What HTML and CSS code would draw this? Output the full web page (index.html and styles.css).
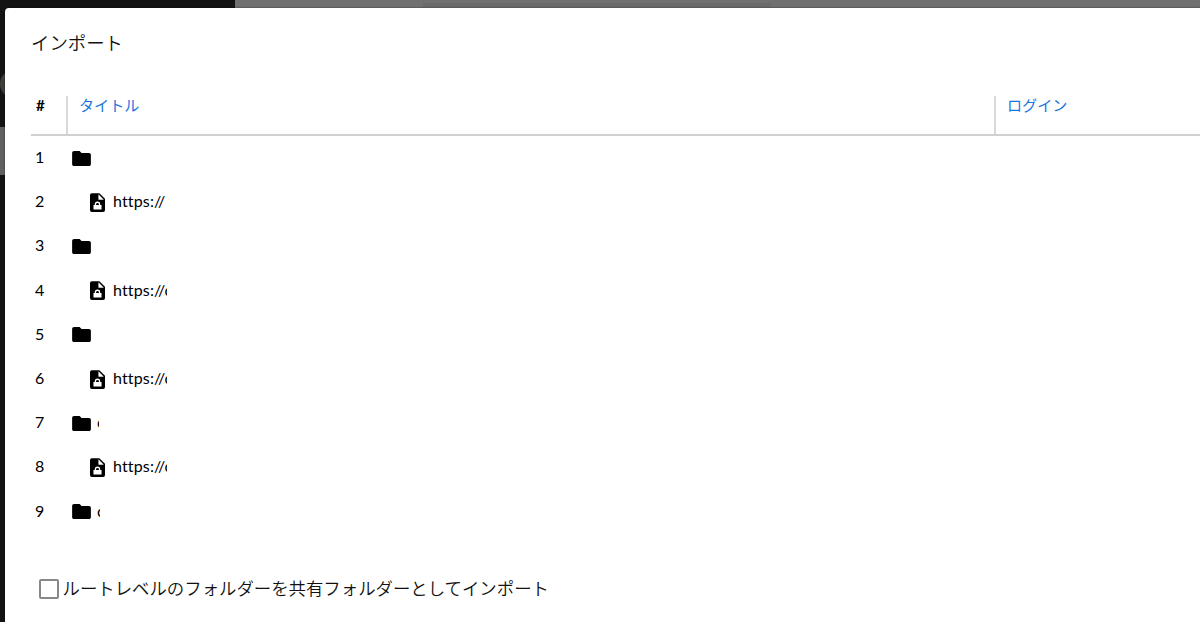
FILE: index.html
```html
<!DOCTYPE html>
<html lang="ja">

<head>
    <meta charset="UTF-8">
    <meta name="viewport" content="width=device-width, initial-scale=1.0">
    <title>インポート</title>
    <link rel="stylesheet" href="styles.css">
</head>

<body>
    <svg class="symbols" width="0" height="0">
        <symbol id="folder" viewBox="2 4 20 16">
            <path d="M10 4H4c-1.1 0-2 .9-2 2v12c0 1.1.9 2 2 2h16c1.1 0 2-.9 2-2V8c0-1.1-.9-2-2-2h-8z" />
        </symbol>
        <symbol id="entry" viewBox="0 0 16 20">
            <path d="M2 0h8l6 6v12a2 2 0 0 1-2 2H2a2 2 0 0 1-2-2V2a2 2 0 0 1 2-2z" />
            <path fill="#fff" d="M9 1.3V7h5.7z" />
            <path fill="#fff" d="M3.7 12.6h1.4v-.8a2.9 2.9 0 0 1 5.8 0v.8h1.4v4.9H3.7z" />
            <path d="M6.5 12.6v-.7a1.5 1.5 0 0 1 3 0v.7z" />
        </symbol>
    </svg>

    <div class="backdrop">
        <div class="sidebar">
            <span class="avatar"></span>
            <span class="active-item"></span>
        </div>
        <div class="topbar"><span class="search"></span></div>
    </div>

    <div class="modal">
        <h1 class="modal-title">インポート</h1>

        <div class="table">
            <div class="row head">
                <span class="number">#</span>
                <span class="title">タイトル</span>
                <span class="login">ログイン</span>
            </div>
            <div class="row">
                <span class="number">1</span>
                <svg class="folder"><use href="#folder" /></svg>
            </div>
            <div class="row">
                <span class="number">2</span>
                <svg class="entry"><use href="#entry" /></svg>
                <span class="url">https://</span>
            </div>
            <div class="row">
                <span class="number">3</span>
                <svg class="folder"><use href="#folder" /></svg>
            </div>
            <div class="row">
                <span class="number">4</span>
                <svg class="entry"><use href="#entry" /></svg>
                <span class="url">https://c</span>
            </div>
            <div class="row">
                <span class="number">5</span>
                <svg class="folder"><use href="#folder" /></svg>
            </div>
            <div class="row">
                <span class="number">6</span>
                <svg class="entry"><use href="#entry" /></svg>
                <span class="url">https://c</span>
            </div>
            <div class="row">
                <span class="number">7</span>
                <svg class="folder"><use href="#folder" /></svg>
                <span class="name short">c</span>
            </div>
            <div class="row">
                <span class="number">8</span>
                <svg class="entry"><use href="#entry" /></svg>
                <span class="url">https://c</span>
            </div>
            <div class="row">
                <span class="number">9</span>
                <svg class="folder"><use href="#folder" /></svg>
                <span class="name">c</span>
            </div>
        </div>

        <label class="option">
            <input type="checkbox" class="checkbox">
            <span>ルートレベルのフォルダーを共有フォルダーとしてインポート</span>
        </label>
    </div>
</body>

</html>
```
FILE: styles.css
```css
* {
    margin: 0;
    padding: 0;
    box-sizing: border-box;
}

body {
    height: 622px;
    overflow: hidden;
    background-color: #141414;
    color: #111;
    font-family: Lato, "Noto Sans CJK JP", sans-serif;
    font-size: 16px;
}

.symbols {
    position: absolute;
}

/* the page that is dimmed behind the dialog */
.backdrop {
    position: absolute;
    inset: 0;
    display: flex;
}

.sidebar {
    position: relative;
    width: 235px;
    background-color: #141313;
}

.avatar {
    position: absolute;
    left: 0;
    top: 70px;
    width: 28px;
    height: 28px;
    border-radius: 50%;
    background-color: #403f3a;
}

.active-item {
    position: absolute;
    left: 0;
    top: 127px;
    width: 200px;
    height: 48px;
    background-color: #606060;
}

.topbar {
    flex: 1;
    padding-left: 188px;
    background-color: #707070;
}

.search {
    display: block;
    width: 348px;
    height: 8px;
    margin-top: 3px;
    background-color: #6a6a6a;
}

.modal {
    position: relative;
    height: 614px;
    margin: 8px 0 0 5px;
    padding: 20px 0 0 26px;
    border-radius: 4px 0 0 0;
    background-color: #fff;
    box-shadow: 0 0 2px rgba(0, 0, 0, 0.6);
}

.modal-title {
    height: 68px;
    font-size: 18.4px;
    line-height: 30px;
    font-weight: 350;
}

.row {
    display: flex;
    align-items: center;
    height: 44.2px;
    padding-left: 4px;
    color: #000;
}

.head {
    align-items: stretch;
    height: 40px;
    padding-left: 5px;
    border-bottom: 2px solid #d0d0d0;
    font-size: 15.1px;
    line-height: 18px;
    color: #1b75e0;
}

.number {
    width: 37px;
    padding-bottom: 3px;
}

.head .number {
    width: 30px;
    font-weight: 700;
    line-height: 19px;
    color: #000;
}

.title,
.login {
    padding-left: 11px;
    border-left: 2px solid #d9d9d9;
}

.title {
    width: 928px;
}

.login {
    flex: 1;
}

.folder {
    width: 19px;
    height: 15px;
}

.entry {
    width: 15px;
    height: 19px;
    margin: 0 8px 0 18px;
}

.url,
.name {
    overflow: hidden;
    padding-bottom: 3px;
    white-space: nowrap;
}

.url {
    width: 53.5px;
    letter-spacing: 0.15px;
}

.name {
    width: 3px;
    margin-left: 6px;
}

.name.short {
    width: 2px;
}

.option {
    display: flex;
    align-items: center;
    margin: 43px 0 0 7.5px;
    font-size: 17.4px;
    font-weight: 350;
    line-height: 24px;
}

.checkbox {
    appearance: none;
    width: 20px;
    height: 20px;
    margin-right: 4px;
    border: 2px solid #888;
    border-radius: 2px;
}
```
